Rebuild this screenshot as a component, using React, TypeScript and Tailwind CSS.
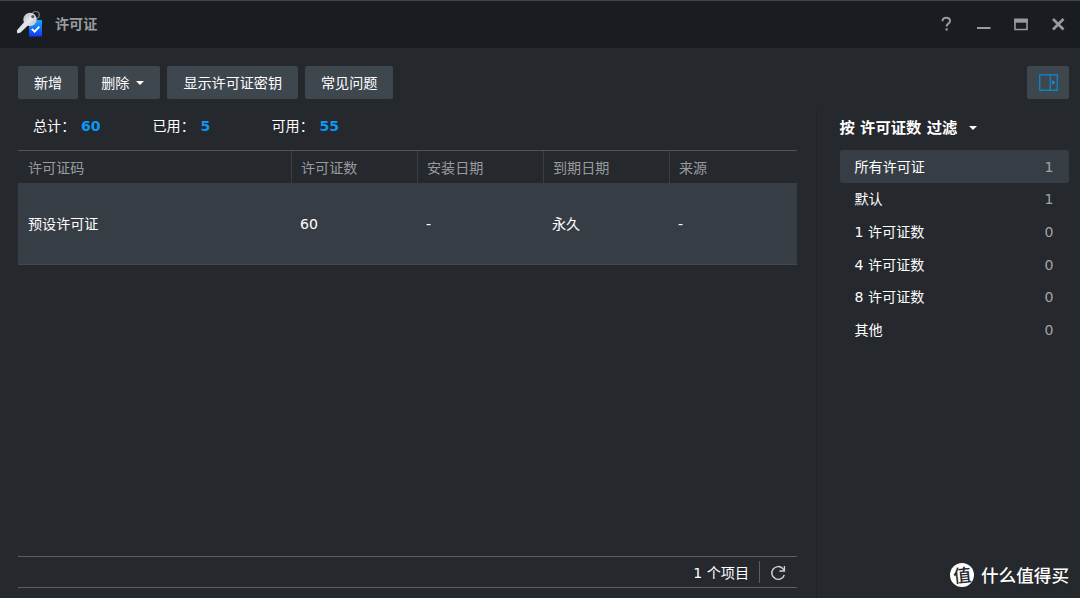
import React from "react";

const columns = [
  { label: "许可证码", value: "预设许可证", width: "w-[273px]" },
  { label: "许可证数", value: "60", width: "w-[126px]" },
  { label: "安装日期", value: "-", width: "w-[126px]" },
  { label: "到期日期", value: "永久", width: "w-[126px]" },
  { label: "来源", value: "-", width: "w-[128px]" },
];

const totals = [
  { label: "总计：", value: "60", width: "w-[119.5px]" },
  { label: "已用：", value: "5", width: "w-[119px]" },
  { label: "可用：", value: "55", width: "w-[120px]" },
];

const filters = [
  { label: "所有许可证", count: 1 },
  { label: "默认", count: 1 },
  { label: "1 许可证数", count: 0 },
  { label: "4 许可证数", count: 0 },
  { label: "8 许可证数", count: 0 },
  { label: "其他", count: 0 },
];

function LicenseIcon() {
  return (
    <svg className="mb-0.5 h-7 w-7" viewBox="0 0 28 28" fill="none">
      <defs>
        <linearGradient id="card" x1="0" y1="0" x2="0" y2="1">
          <stop offset="0" stopColor="#16a9ff" />
          <stop offset="1" stopColor="#1238f5" />
        </linearGradient>
        <linearGradient id="metal" x1="0" y1="0" x2="1" y2="1">
          <stop offset="0" stopColor="#aab0b4" />
          <stop offset="0.5" stopColor="#e6e9eb" />
          <stop offset="1" stopColor="#b4babe" />
        </linearGradient>
      </defs>
      <rect x="13" y="10" width="13" height="16.5" rx="0.8" fill="url(#card)" />
      <circle cx="19.8" cy="5" r="3.5" stroke="#767c81" strokeWidth="1.2" />
      <path d="M8.6 11.5 L12.4 15 L4.6 22.6 L1.4 23.4 L0.8 20.6 Z" fill="#e1e4e6" />
      <circle cx="14" cy="9.4" r="6.7" fill="url(#metal)" />
      <circle cx="16.8" cy="6.6" r="1.6" fill="#555b60" />
      <path d="M15.8 18.8 L18.6 21.6 L23.3 16.6" stroke="#fff" strokeWidth="1.9" />
    </svg>
  );
}

function Caret() {
  return (
    <svg className="h-1 w-2" viewBox="0 0 8 4" fill="currentColor">
      <path d="M0 0h8L4 4z" />
    </svg>
  );
}

function ToolButton({ children }: { children: React.ReactNode }) {
  return (
    <button className="flex h-[33px] items-center rounded-xs bg-[#3e464e] px-4 whitespace-nowrap text-white">
      {children}
    </button>
  );
}

function TitleBar() {
  return (
    <header className="flex h-12 shrink-0 items-center border-t border-[#414549] bg-[#191c20] pr-[13px] pl-4 text-[#999b9d]">
      <LicenseIcon />
      <h1 className="mb-px ml-[11px] font-bold">许可证</h1>
      <svg
        className="mb-0.5 ml-auto h-4 w-[126px]"
        viewBox="0 0 126 16"
        fill="none"
        stroke="currentColor"
      >
        <path d="M1.5 5.2C1.5 2.8 3 1.7 5.1 1.7S9 2.8 9 4.9C9 7.7 5.6 7.6 5.6 10.5" strokeWidth="2" />
        <path d="M4.5 12.3h2.2v2.2H4.5z" fill="currentColor" stroke="none" />
        <path d="M36 12h13.5" strokeWidth="2" />
        <path d="M74 3.5h12v10H74z" strokeWidth="1.6" />
        <path d="M73.2 2.7h13.6v4H73.2z" fill="currentColor" stroke="none" />
        <path d="M112 3l10.5 10.5M122.5 3L112 13.5" strokeWidth="2.6" />
      </svg>
    </header>
  );
}

function LicenseTable() {
  return (
    <div className="mt-2">
      <div className="flex h-[33px] border-t border-[#4f5357] text-[#989b9e]">
        {columns.map((col, i) => (
          <div
            key={col.label}
            className={`${col.width} flex items-center pt-px ${i === 0 ? "pl-2.5" : "border-l border-[#3a3e43] pl-[9px]"}`}
          >
            {col.label}
          </div>
        ))}
      </div>
      <div className="flex h-[82px] border-b border-[#41484f] bg-[#373d45] text-white">
        {columns.map((col, i) => (
          <div key={col.label} className={`${col.width} flex items-center ${i === 0 ? "pl-2.5" : "pl-[9px]"}`}>
            {col.value}
          </div>
        ))}
      </div>
    </div>
  );
}

function FilterPanel() {
  return (
    <aside className="flex flex-1 flex-col">
      <button className="mr-[11px] ml-auto flex h-[33px] w-[42px] items-center justify-center rounded-xs bg-[#3e464e]">
        <svg className="h-[17px] w-[19px]" viewBox="0 0 19 17" fill="none" stroke="#147fc0">
          <path d="M0.7 0.7h17.6v15.6H0.7zM11.3 0.7v15.6" strokeWidth="1.4" />
          <path d="M13.2 6v5l3.2-2.5z" fill="#0f95e6" stroke="none" />
        </svg>
      </button>
      <div className="mt-3 flex-1 border-l border-[#1f2226] pr-[11.5px] pl-[22.5px]">
        <div className="flex h-[33px] items-center gap-3 text-[15.3px] font-bold text-white">
          按 许可证数 过滤
          <Caret />
        </div>
        <ul className="mt-1.5">
          {filters.map((item, i) => (
            <li
              key={item.label}
              className={`flex h-[32.6px] items-center justify-between rounded-xs pt-px pr-[15px] pl-[15px] ${i === 0 ? "bg-[#373d45]" : ""}`}
            >
              <span className="text-white">{item.label}</span>
              <span className="text-[#a0a3a6]">{item.count}</span>
            </li>
          ))}
        </ul>
      </div>
    </aside>
  );
}

function Watermark() {
  return (
    <div className="absolute right-[11px] bottom-[11px] flex items-center gap-[7px] font-['Noto_Sans_CJK_SC',sans-serif] font-medium text-white">
      <span className="flex h-6 w-6 items-center justify-center rounded-full bg-white text-[18px] leading-none text-[#25282d]">
        <span className="mb-0.5 -rotate-6">值</span>
      </span>
      <span className="text-[17.6px] leading-6 text-shadow-2xs">什么值得买</span>
    </div>
  );
}

export default function App() {
  return (
    <div className="relative flex h-[598px] w-[1080px] flex-col overflow-hidden bg-[#25282d] font-['DejaVu_Sans','Noto_Sans_CJK_SC',sans-serif] text-[14.1px] leading-5">
      <TitleBar />
      <main className="flex flex-1 pt-[18px]">
        <section className="mr-[19px] ml-[18px] flex w-[779px] flex-col pb-2.5">
          <div className="flex gap-[7px]">
            <ToolButton>新增</ToolButton>
            <ToolButton>
              删除
              <span className="ml-[7px]">
                <Caret />
              </span>
            </ToolButton>
            <ToolButton>显示许可证密钥</ToolButton>
            <ToolButton>常见问题</ToolButton>
          </div>
          <div className="mt-[11px] flex h-8 items-center pl-[15px] text-white">
            {totals.map((item) => (
              <div key={item.label} className={`${item.width} flex items-center`}>
                <span className="w-12">{item.label}</span>
                <b className="text-[#0a97f5]">{item.value}</b>
              </div>
            ))}
          </div>
          <LicenseTable />
          <footer className="mt-auto flex h-8 items-center justify-end border-y border-[#5a5d61] text-white">
            <span className="pt-px">1 个项目</span>
            <span className="ml-2.5 h-[22px] w-px bg-[#5a5d61]" />
            <svg className="mt-px mr-[11px] ml-2.5 h-4 w-4" viewBox="0 0 16 16" fill="none" stroke="#cfd1d3" strokeWidth="1.4">
              <path d="M14.3 10A6.4 6.4 0 1 1 12.7 3.4L14.3 5.6" />
              <path d="M14.4 1v5h-5" />
            </svg>
          </footer>
        </section>
        <FilterPanel />
      </main>
      <Watermark />
    </div>
  );
}
